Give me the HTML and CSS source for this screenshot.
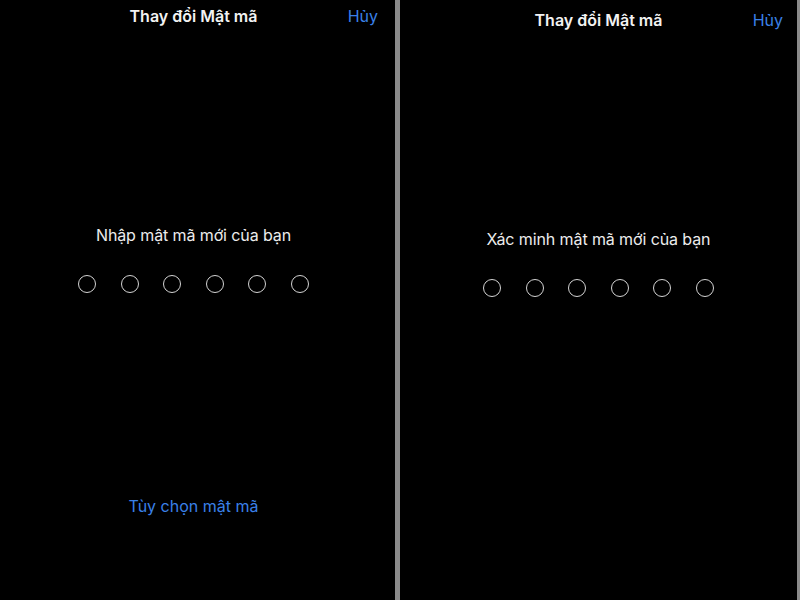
FILE: index.html
```html
<!DOCTYPE html>
<html lang="vi">
<head>
    <meta charset="UTF-8">
    <title>Thay đổi Mật mã</title>
    <link rel="stylesheet" href="styles.css">
</head>
<body>
    <div class="screens">
        <!-- Bước 1 -->
        <div class="screen screen-left">
            <div class="nav">
                <span class="nav-title">Thay đổi Mật mã</span>
                <span class="nav-cancel">Hủy</span>
            </div>
            <div class="prompt">Nhập mật mã mới của bạn</div>
            <div class="dots">
                <span class="dot"></span><span class="dot"></span><span class="dot"></span>
                <span class="dot"></span><span class="dot"></span><span class="dot"></span>
            </div>
            <div class="options">Tùy chọn mật mã</div>
        </div>

        <div class="divider"></div>

        <!-- Bước 2 -->
        <div class="screen screen-right">
            <div class="nav">
                <span class="nav-title">Thay đổi Mật mã</span>
                <span class="nav-cancel">Hủy</span>
            </div>
            <div class="prompt">Xác minh mật mã mới của bạn</div>
            <div class="dots">
                <span class="dot"></span><span class="dot"></span><span class="dot"></span>
                <span class="dot"></span><span class="dot"></span><span class="dot"></span>
            </div>
        </div>

        <div class="edge"></div>
    </div>
</body>
</html>
```

FILE: styles.css
```css
body {
    margin: 0;
    background-color: #000;
    font-family: Inter, "Noto Sans", sans-serif;
    color: #fff;
    overflow: hidden;
}
.screens {
    display: flex;
    height: 600px;
    width: 800px;
}
.screen {
    position: relative;
    height: 600px;
    display: flex;
    flex-direction: column;
    align-items: center;
    background-color: #000;
}
.screen-left {
    width: 403px;
    margin-left: -8px;
}
.screen-right {
    width: 397px;
    padding-top: 4px;
}
.divider {
    width: 5px;
    background-color: #8a8a8a;
}
.edge {
    width: 3px;
    background-color: #8a8a8a;
}
.nav {
    position: relative;
    width: 100%;
    height: 32px;
    display: flex;
    justify-content: center;
    align-items: center;
}
.nav-title {
    font-size: 16px;
    font-weight: 600;
    color: #f2f2f2;
}
.nav-cancel {
    position: absolute;
    right: 17px;
    top: 6px;
    font-size: 16px;
    color: #3a80e8;
}
.screen-right .nav-cancel {
    right: 14px;
}
.prompt {
    margin-top: 193px;
    font-size: 16px;
    color: #ececec;
    letter-spacing: -0.1px;
}
.dots {
    display: flex;
    gap: 24.5px;
    margin-top: 30px;
}
.dot {
    width: 16px;
    height: 16px;
    border: 1.5px solid #d4d4d4;
    border-radius: 50%;
}
.options {
    margin-top: 203px;
    font-size: 16px;
    color: #3a80e8;
}
```
